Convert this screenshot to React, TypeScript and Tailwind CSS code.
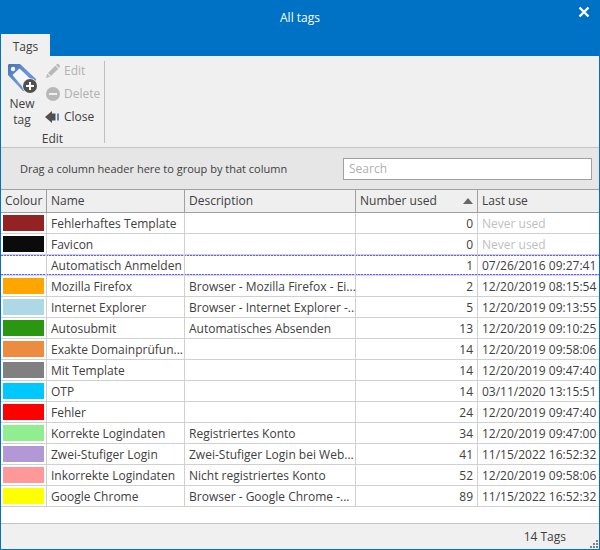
import React from "react";

type Tag = {
  colour: string;
  name: string;
  description?: string;
  used: number;
  last?: string;
  focused?: boolean;
};

const tags: Tag[] = [
  { colour: "bg-[#942222]", name: "Fehlerhaftes Template", used: 0 },
  { colour: "bg-[#0b0b0b]", name: "Favicon", used: 0 },
  { colour: "bg-white", name: "Automatisch Anmelden", used: 1, last: "07/26/2016 09:27:41", focused: true },
  { colour: "bg-[#ffa500]", name: "Mozilla Firefox", description: "Browser - Mozilla Firefox - Ei...", used: 2, last: "12/20/2019 08:15:54" },
  { colour: "bg-[#add8e6]", name: "Internet Explorer", description: "Browser - Internet Explorer -...", used: 5, last: "12/20/2019 09:13:55" },
  { colour: "bg-[#2b9612]", name: "Autosubmit", description: "Automatisches Absenden", used: 13, last: "12/20/2019 09:10:25" },
  { colour: "bg-[#ec8c40]", name: "Exakte Domainprüfun...", used: 14, last: "12/20/2019 09:58:06" },
  { colour: "bg-[#808080]", name: "Mit Template", used: 14, last: "12/20/2019 09:47:40" },
  { colour: "bg-[#00c8ff]", name: "OTP", used: 14, last: "03/11/2020 13:15:51" },
  { colour: "bg-[#ff0000]", name: "Fehler", used: 24, last: "12/20/2019 09:47:40" },
  { colour: "bg-[#90ee90]", name: "Korrekte Logindaten", description: "Registriertes Konto", used: 34, last: "12/20/2019 09:47:00" },
  { colour: "bg-[#b398d6]", name: "Zwei-Stufiger Login", description: "Zwei-Stufiger Login bei Web...", used: 41, last: "11/15/2022 16:52:32" },
  { colour: "bg-[#ff9999]", name: "Inkorrekte Logindaten", description: "Nicht registriertes Konto", used: 52, last: "12/20/2019 09:58:06" },
  { colour: "bg-[#ffff00]", name: "Google Chrome", description: "Browser - Google Chrome -...", used: 89, last: "11/15/2022 16:52:32" },
];

function NewTagIcon() {
  return (
    <svg className="h-8 w-8" viewBox="0 0 32 32" fill="none">
      <defs>
        <linearGradient id="tagStroke" x1="2" y1="3" x2="26" y2="28" gradientUnits="userSpaceOnUse">
          <stop offset="0" stopColor="#4472bc" />
          <stop offset="0.6" stopColor="#6f97d6" />
          <stop offset="1" stopColor="#5b84c8" />
        </linearGradient>
      </defs>
      <path d="M3 3H14L30 18V20L26 22L20 30H17L2 14V4Z" fill="url(#tagStroke)" />
      <path d="M13.500 7.500L27.500 21L19 29L6.500 14Z" fill="#f6f7f9" />
      <circle cx="7" cy="8" r="2.200" fill="#f6f7f9" />
      <circle cx="24" cy="25" r="7.800" fill="#f0f0f0" />
      <circle cx="24" cy="25" r="7" fill="#505050" />
      <path d="M24 21V29M20 25H28" stroke="#fff" strokeWidth="2" />
    </svg>
  );
}

function PencilIcon() {
  return (
    <svg className="h-4 w-4" viewBox="0 0 16 16" fill="#b8b8b8">
      <path d="M1 15L2.200 10.800L5.200 13.800Z" />
      <path d="M3 10L10.300 2.700L13.300 5.700L6 13Z" />
      <path d="M11 2L12 1Q13 .5 14 1.500L14.600 2.200Q15.300 3 14.600 4L14 5Z" />
    </svg>
  );
}

function DeleteIcon() {
  return (
    <svg className="h-4 w-4" viewBox="0 0 16 16">
      <circle cx="8" cy="8" r="7" fill="#b8b8b8" />
      <path d="M4 8H12" stroke="#f0f0f0" strokeWidth="2" />
    </svg>
  );
}

function CloseArrowIcon() {
  return (
    <svg className="h-4 w-4" viewBox="0 0 16 16">
      <path d="M0 8L7 2V4.500H10.500V11.500H7V14Z" fill="#505050" />
      <path d="M13 4.500V11.500" stroke="#5b86cb" strokeWidth="2" />
    </svg>
  );
}

const headCell = "border-b border-r border-[#a0a0a0] bg-[#efefef] px-1 text-left font-normal text-[#404040] last:border-r-0";
const baseCell = "h-[21px] overflow-hidden whitespace-nowrap border-b border-r border-r-[#d0d0d0] pb-0 last:border-r-0";
const plainCell = "border-b-[#d0d0d0]";
const focusedCell = "border-b-[#d6d2f4]";
// Dashed focus frame: one-pixel strips along the top and bottom of the row.
const focusedRow =
  "bg-[image:repeating-linear-gradient(90deg,#6a62dc_0px_2px,#d6d2f4_2px_3px),repeating-linear-gradient(90deg,#6a62dc_0px_2px,#d6d2f4_2px_3px)] bg-[size:100%_1px] bg-[position:0_0,0_19px] bg-no-repeat";

export default function App() {
  return (
    <div className="flex min-h-screen flex-col border border-t-0 border-[#0072c6] bg-white font-['Open_Sans','Noto_Sans',sans-serif] text-[12px] leading-4 text-[#404040]">
      <header className="bg-[#0072c6]">
        <div className="grid h-[34px] grid-cols-[1fr_auto_1fr] items-center text-white">
          <h1 className="col-start-2 pt-0.5">All tags</h1>
          <button type="button" aria-label="Close window" className="mb-2.5 mr-[5px] justify-self-end p-1">
            <svg className="h-3 w-3" viewBox="0 0 12 12" stroke="#fff" strokeWidth="2.4">
              <path d="M1.500 1.500L10.500 10.500M10.500 1.500L1.500 10.500" />
            </svg>
          </button>
        </div>
        <div role="tablist" className="flex">
          <button type="button" role="tab" aria-selected="true" className="h-[22px] w-[49px] bg-[#f0f0f0] pt-1">
            Tags
          </button>
        </div>
      </header>

      <div className="flex h-[92px] border-b border-[#c4c4c4] bg-[#f0f0f0] pt-1">
        <section className="mb-1 mt-px flex w-[104px] flex-col border-r border-[#bebebe]">
          <div className="flex">
            <button type="button" className="flex w-[42px] flex-col items-center">
              <NewTagIcon />
              <span className="pt-[3px]">New</span>
              <span>tag</span>
            </button>
            <div className="flex flex-col pl-[2px] pt-0.5">
              <button type="button" disabled className="flex h-[23px] items-start gap-[3px] text-[#b0b0b0]"><PencilIcon />Edit</button>
              <button type="button" disabled className="flex h-[23px] items-start gap-[3px] text-[#b0b0b0]"><DeleteIcon />Delete</button>
              <button type="button" className="flex h-[23px] items-start gap-[3px]"><CloseArrowIcon />Close</button>
            </div>
          </div>
          <h2 className="-mt-px text-center">Edit</h2>
        </section>
      </div>

      <div className="flex h-[41px] items-center justify-between bg-[#e6e6e6] pl-[19px] pr-[7px]">
        <p className="whitespace-nowrap text-[11px]">Drag a column header here to group by that column</p>
        <input
          type="text"
          aria-label="Search"
          placeholder="Search"
          className="h-[22px] w-[249px] border border-[#a0a0a0] bg-white px-[5px] outline-none placeholder:text-[#b0b0b0]"
        />
      </div>

      <table className="w-full table-fixed border-separate border-spacing-0 border-t border-[#a0a0a0]">
        <colgroup>
          <col className="w-[46px]" />
          <col className="w-[138px]" />
          <col className="w-[171px]" />
          <col className="w-[122px]" />
          <col />
        </colgroup>
        <thead>
          <tr className="h-[23px]">
            <th scope="col" className={headCell}>Colour</th>
            <th scope="col" className={headCell}>Name</th>
            <th scope="col" className={headCell}>Description</th>
            <th scope="col" aria-sort="ascending" className={headCell}>
              <div className="flex items-center justify-between">
                Number used
                <svg className="h-[6px] w-[10px]" viewBox="0 0 10 6"><path d="M5 0L10 6H0Z" fill="#686868" /></svg>
              </div>
            </th>
            <th scope="col" className={headCell}>Last use</th>
          </tr>
        </thead>
        <tbody>
          {tags.map((tag) => {
            const cell = `${baseCell} ${tag.focused ? focusedCell : plainCell}`;
            const textCell = `${cell} px-1 pt-0.5`;
            return (
              <tr key={tag.name} className={tag.focused ? focusedRow : undefined}>
                <td className={`${cell} px-[2px] pt-0`}>
                  {!tag.focused && <div className={`h-4 w-[41px] ${tag.colour}`} />}
                </td>
                <td className={textCell}>{tag.name}</td>
                <td className={textCell}>{tag.description}</td>
                <td className={`${textCell} text-right`}>{tag.used}</td>
                <td className={textCell}>
                  {tag.last ?? <span className="text-[#c0c0c0]">Never used</span>}
                </td>
              </tr>
            );
          })}
        </tbody>
      </table>

      <footer className="mt-auto flex h-[26px] items-center justify-end border-t border-[#c4c4c4] bg-[#f0f0f0]">
        <span>14 Tags</span>
        <svg className="ml-6 h-[9px] w-[9px] self-end" viewBox="0 0 9 9" fill="#808080">
          <path d="M6 0h2v2h-2zM3 3h2v2h-2zM6 3h2v2h-2zM0 6h2v2h-2zM3 6h2v2h-2zM6 6h2v2h-2z" />
        </svg>
      </footer>
    </div>
  );
}
